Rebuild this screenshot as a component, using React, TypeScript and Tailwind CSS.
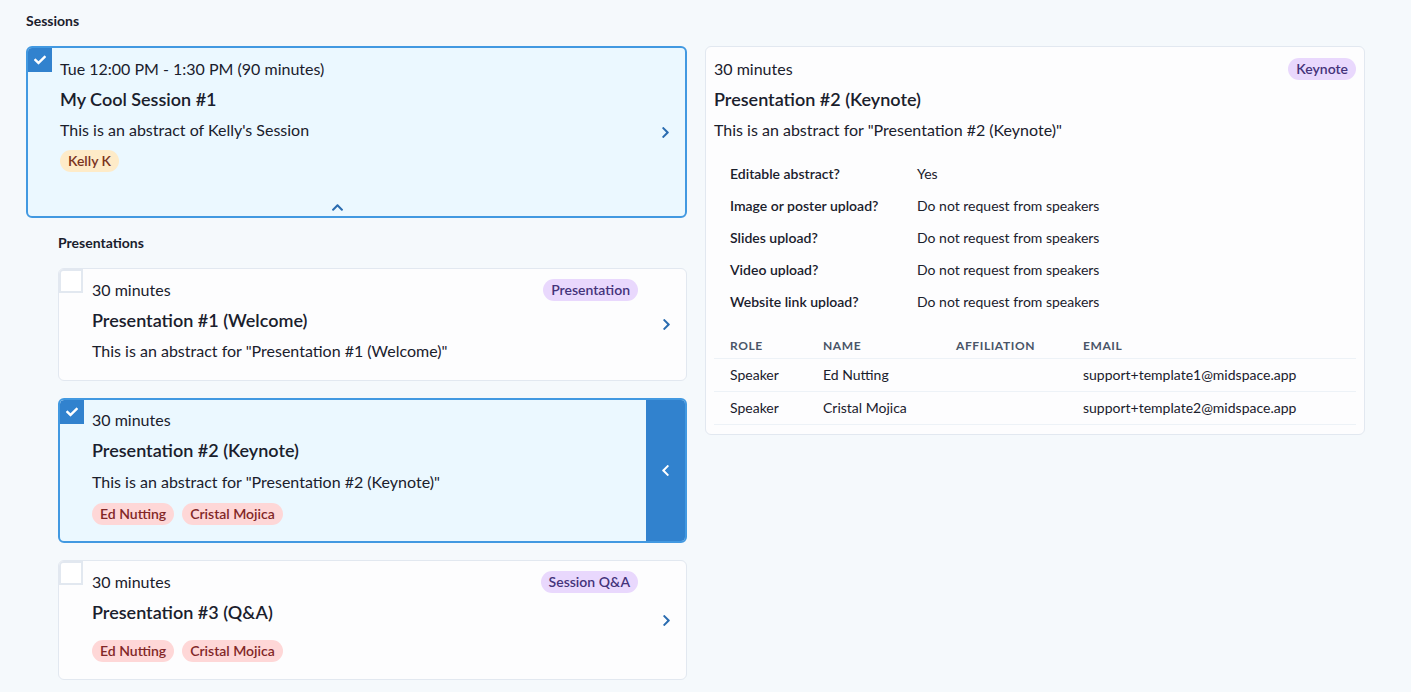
import { FaCheck, FaChevronLeft, FaChevronRight, FaChevronUp } from "react-icons/fa"

type Tone = "orange" | "red" | "purple"

const toneClass: Record<Tone, string> = {
  orange: "bg-[#feebc8] text-[#7b341e]",
  red: "bg-[#fed7d7] text-[#822727]",
  purple: "bg-[#e9d8fd] text-[#44337a]",
}

function Tag({ children, tone }: { children: string; tone: Tone }) {
  return (
    <span className={`inline-flex h-[22px] items-center rounded-full px-2 text-[14px] font-semibold leading-none ${toneClass[tone]}`}>
      {children}
    </span>
  )
}

function Check({ checked }: { checked: boolean }) {
  if (checked) {
    return (
      <span className="absolute left-0 top-0 flex h-6 w-6 items-center justify-center rounded-tl-[4px] bg-[#3182ce] text-white">
        <FaCheck size={12} />
      </span>
    )
  }
  return <span className="absolute left-0 top-0 h-6 w-6 rounded-tl-[4px] border-2 border-[#e2e8f0] bg-white" />
}

type Presentation = {
  title: string
  kind: string
  abstract?: string
  people: string[]
  selected?: boolean
}

const presentations: Presentation[] = [
  { title: "Presentation #1 (Welcome)", kind: "Presentation", abstract: 'This is an abstract for "Presentation #1 (Welcome)"', people: [] },
  { title: "Presentation #2 (Keynote)", kind: "Keynote", abstract: 'This is an abstract for "Presentation #2 (Keynote)"', people: ["Ed Nutting", "Cristal Mojica"], selected: true },
  { title: "Presentation #3 (Q&A)", kind: "Session Q&A", people: ["Ed Nutting", "Cristal Mojica"] },
]

function PresentationCard({ p }: { p: Presentation }) {
  return (
    <div
      className={`relative flex overflow-hidden rounded-md ${
        p.selected ? "border-2 border-[#4299e1] bg-[#ebf8ff]" : "border border-[#e2e8f0] bg-[#fdfdfe]"
      }`}
    >
      <Check checked={!!p.selected} />
      <div className={`flex flex-1 flex-col ${p.selected ? "pb-[16px] pl-[32px] pt-[8px]" : "pb-[17px] pl-[33px] pt-[9px]"}`}>
        <div className="flex h-[24px] items-center justify-between pr-[9px]">
          <span className="text-[16px] leading-6">30 minutes</span>
          {!p.selected && <Tag tone="purple">{p.kind}</Tag>}
        </div>
        <h3 className="mt-[5px] text-[18px] font-semibold leading-[27px]">{p.title}</h3>
        {p.abstract && (
          <p className={`text-[16px] leading-6 ${p.selected ? "mt-[6px]" : "mt-[5px]"}`}>{p.abstract}</p>
        )}
        {p.people.length > 0 && (
          <div className={`flex gap-2 ${p.abstract ? "mt-[9px]" : "mt-[14px]"}`}>
            {p.people.map((n) => (
              <Tag key={n} tone="red">
                {n}
              </Tag>
            ))}
          </div>
        )}
      </div>
      <div
        className={`flex w-[39px] shrink-0 items-center justify-center ${
          p.selected ? "bg-[#3182ce] text-white" : "text-[#2b6cb0]"
        }`}
      >
        {p.selected ? <FaChevronLeft size={13} /> : <FaChevronRight size={13} />}
      </div>
    </div>
  )
}

const settings = [
  ["Editable abstract?", "Yes"],
  ["Image or poster upload?", "Do not request from speakers"],
  ["Slides upload?", "Do not request from speakers"],
  ["Video upload?", "Do not request from speakers"],
  ["Website link upload?", "Do not request from speakers"],
]

const speakers = [
  { role: "Speaker", name: "Ed Nutting", email: "support+template1@midspace.app" },
  { role: "Speaker", name: "Cristal Mojica", email: "support+template2@midspace.app" },
]

export default function App() {
  return (
    <div className="min-h-[692px] bg-[#f5f9fc] px-[26px] pt-[12px] text-[#1a202c] [font-family:Lato,'Liberation_Sans',sans-serif]">
      <h2 className="text-[14px] font-bold leading-[18px]">Sessions</h2>
      <div className="mt-[16px] flex items-start gap-[18px]">
        <div className="flex w-[661px] flex-col">
          <div className="relative flex rounded-md border-2 border-[#4299e1] bg-[#ebf8ff]">
            <Check checked />
            <div className="flex flex-1 flex-col pl-[32px] pt-[9px]">
              <span className="text-[16px] leading-6">Tue 12:00 PM - 1:30 PM (90 minutes)</span>
              <h3 className="mt-[5px] text-[18px] font-semibold leading-[27px]">My Cool Session #1</h3>
              <p className="mt-[5px] text-[16px] leading-6">This is an abstract of Kelly's Session</p>
              <div className="mt-[8px] flex">
                <Tag tone="orange">Kelly K</Tag>
              </div>
              <div className="ml-[-32px] mt-[26px] flex h-[18px] items-center justify-center text-[#2b6cb0]">
                <FaChevronUp size={13} />
              </div>
            </div>
            <div className="flex w-[39px] shrink-0 items-center justify-center text-[#2b6cb0]">
              <FaChevronRight size={13} />
            </div>
          </div>
          <div className="ml-[32px] mt-[16px] flex flex-col">
            <h4 className="text-[14px] font-bold leading-[18px]">Presentations</h4>
            <div className="mt-[16px] flex flex-col gap-[17px]">
              {presentations.map((p) => (
                <PresentationCard key={p.title} p={p} />
              ))}
            </div>
          </div>
        </div>

        <div className="w-[660px] rounded-md border border-[#e2e8f0] bg-[#fdfdfe] px-[8px] pb-[9px] pt-[10px]">
          <div className="flex h-[24px] items-center justify-between">
            <span className="text-[16px] leading-6">30 minutes</span>
            <Tag tone="purple">Keynote</Tag>
          </div>
          <h3 className="mt-[5px] text-[18px] font-semibold leading-[27px]">Presentation #2 (Keynote)</h3>
          <p className="mt-[5px] text-[16px] leading-6">This is an abstract for "Presentation #2 (Keynote)"</p>
          <table className="mt-[15px] text-[14px]">
            <tbody>
              {settings.map(([k, v]) => (
                <tr key={k} className="h-[32px]">
                  <td className="w-[203px] pl-[16px] font-semibold">{k}</td>
                  <td>{v}</td>
                </tr>
              ))}
            </tbody>
          </table>
          <table className="mt-[17px] w-full text-left text-[14px]">
            <thead>
              <tr className="h-[24px] border-b border-[#edf2f7] text-[12px] font-bold uppercase tracking-wider text-[#4a5568]">
                <th className="w-[109px] pl-[16px] font-bold">Role</th>
                <th className="w-[133px] font-bold">Name</th>
                <th className="w-[127px] font-bold">Affiliation</th>
                <th className="font-bold">Email</th>
              </tr>
            </thead>
            <tbody>
              {speakers.map((s) => (
                <tr key={s.email} className="h-[33px] border-b border-[#edf2f7]">
                  <td className="pl-[16px]">{s.role}</td>
                  <td>{s.name}</td>
                  <td></td>
                  <td>{s.email}</td>
                </tr>
              ))}
            </tbody>
          </table>
        </div>
      </div>
    </div>
  )
}
